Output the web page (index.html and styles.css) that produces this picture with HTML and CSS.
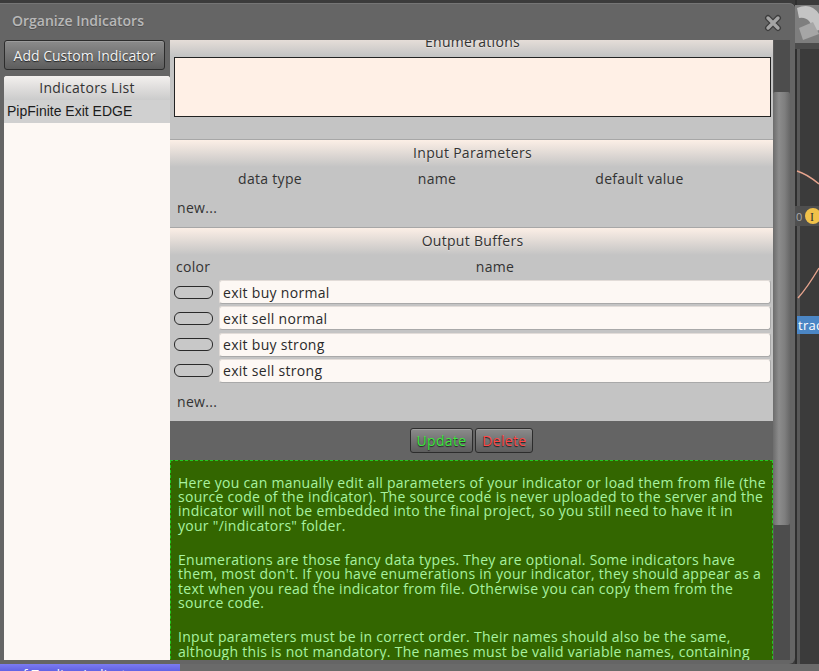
FILE: index.html
```html
<!DOCTYPE html>
<html lang="en">
<head>
  <meta charset="UTF-8" />
  <title>Organize Indicators</title>
  <meta name="viewport" content="width=device-width, initial-scale=1">
  <link rel="stylesheet" href="styles.css">
</head>
<body>
  <div class="desk">
    <div class="dialog">
      <div class="titlebar">
        <span class="title">Organize Indicators</span>
        <svg class="close" width="18" height="18" viewBox="0 0 18 18">
          <path d="M4 4 L14 14 M14 4 L4 14" stroke="#3c3c3c" stroke-width="6" stroke-linecap="round"/>
          <path d="M4 4 L14 14 M14 4 L4 14" stroke="#a4a4a4" stroke-width="3.4" stroke-linecap="round"/>
        </svg>
      </div>

      <div class="dialog-body">
        <div class="left">
          <button class="btn add">Add Custom Indicator</button>
          <div class="list">
            <div class="list-head">Indicators List</div>
            <div class="list-item">PipFinite Exit EDGE</div>
          </div>
        </div>

        <div class="main">
          <div class="content">
            <div class="section enums">
              <div class="section-title">Enumerations</div>
              <textarea class="enum-text"></textarea>
            </div>

            <div class="section">
              <div class="section-title">Input Parameters</div>
              <div class="cols params">
                <span>data type</span>
                <span>name</span>
                <span>default value</span>
              </div>
              <div class="new">new...</div>
            </div>

            <div class="section">
              <div class="section-title">Output Buffers</div>
              <div class="cols buffers">
                <span class="color-head">color</span>
                <span>name</span>
              </div>
              <div class="buffer"><span class="swatch"></span><input class="field" value="exit buy normal"></div>
              <div class="buffer"><span class="swatch"></span><input class="field" value="exit sell normal"></div>
              <div class="buffer"><span class="swatch"></span><input class="field" value="exit buy strong"></div>
              <div class="buffer"><span class="swatch"></span><input class="field" value="exit sell strong"></div>
              <div class="new out">new...</div>
            </div>

            <div class="cmdbar">
              <button class="btn update">Update</button>
              <button class="btn delete">Delete</button>
            </div>

            <div class="help">
              <p>Here you can manually edit all parameters of your indicator or load them from file (the source code of the indicator). The source code is never uploaded to the server and the indicator will not be embedded into the final project, so you still need to have it in your&nbsp;"/indicators" folder.</p>
              <p>Enumerations are those fancy data types. They are optional. Some indicators have them, most don't. If you have enumerations in your indicator, they should appear as a text when you read the indicator from file. Otherwise you can copy them from the source code.</p>
              <p>Input parameters must be in correct order. Their names should also be the same, although this is not mandatory. The names must be valid variable names, containing only letters, digits and underscores.</p>
            </div>
          </div>
        </div>

        <div class="scrollbar"><div class="thumb"></div></div>
      </div>
    </div>

    <div class="side">
      <svg width="24" height="664" viewBox="0 0 24 664">
        <rect x="0" y="0" width="2" height="664" fill="#2f2f2f"/>
        <rect x="2" y="40" width="3" height="624" fill="#585858"/>
        <rect x="0" y="5" width="24" height="38" fill="#7e7e7e"/>
        <path d="M2 8 Q16 2 24 14 L24 30 L18 32 Q16 16 4 18 Z" fill="#c4c4c4"/>
        <path d="M4 28 L18 22 L24 34 L8 40 Z" fill="#a6a6a6"/>
        <rect x="0" y="43" width="24" height="6" fill="#4c4c4c"/>
        <path d="M2 171 Q12 174 24 184" stroke="#e6a48e" stroke-width="1.4" fill="none"/>
        <rect x="0" y="206" width="24" height="20" fill="#4f4f4f"/>
        <text x="1" y="221" font-family="Open Sans, sans-serif" font-size="11" fill="#aaa">0</text>
        <circle cx="18" cy="216" r="8" fill="#f1c24a"/>
        <text x="15" y="221" font-family="Liberation Serif, serif" font-size="12" fill="#333">I</text>
        <path d="M3 298 Q12 288 24 268" stroke="#e6a48e" stroke-width="1.4" fill="none"/>
        <rect x="2" y="316" width="22" height="18" fill="#4b86c5"/>
        <text x="3" y="330" font-family="Open Sans, sans-serif" font-size="13" fill="#fff">trac</text>
      </svg>
    </div>
  </div>

  <div class="taskbar">
    <div class="task">of Trading Indicators</div>
  </div>
</body>
</html>
```

FILE: styles.css
```css
body {
  margin: 0;
  height: 671px;
  overflow: hidden;
  background: #3b3b3b;
  font-family: "Open Sans", "Noto Sans", sans-serif;
  letter-spacing: 0.3px;
  color: #333;
}

.desk {
  display: flex;
  height: 664px;
}

.dialog {
  width: 795px;
  flex: none;
  margin-top: 3px;
  background: #656565;
  border-radius: 0 6px 6px 0;
  box-shadow: inset 0 1px 0 #757575;
  display: flex;
  flex-direction: column;
}

.titlebar {
  height: 37px;
  box-sizing: border-box;
  padding: 0 13px 3px 12px;
  display: flex;
  align-items: center;
  justify-content: space-between;
}

.title {
  font-size: 14px;
  font-weight: 600;
  letter-spacing: 0;
  color: #b8b8b8;
  text-shadow: 0 1px 0 #505050;
}

.close {
  margin-top: 5px;
}

.dialog-body {
  display: flex;
  height: 620px;
  padding-left: 4px;
}

/* left column */

.left {
  width: 166px;
  display: flex;
  flex-direction: column;
  gap: 6px;
}

.btn {
  font-family: "Open Sans", "Noto Sans", sans-serif;
  font-size: 14px;
  letter-spacing: 0.3px;
  border: 1px solid #2c2c2c;
  border-radius: 3px;
  background: linear-gradient(#8b8b8b, #5d5d5d);
  box-shadow: inset 0 1px 0 rgba(255,255,255,0.15);
  padding: 0 6px;
  cursor: pointer;
}

.add {
  width: 161px;
  height: 30px;
  padding: 0 2px;
  letter-spacing: 0;
  color: #f2f2f2;
  text-shadow: 0 1px 1px #222;
}

.list {
  flex: 1;
  background: #fdf8f4;
  border-radius: 3px 3px 0 0;
  overflow: hidden;
}

.list-head {
  height: 24px;
  line-height: 24px;
  text-align: center;
  font-size: 14px;
  color: #333;
  background: linear-gradient(#f3f0ee, #cbcbcb);
}

.list-item {
  height: 23px;
  line-height: 23px;
  padding-left: 3px;
  background: #d0d0d0;
  font-family: "Liberation Sans", Arial, sans-serif;
  font-size: 14px;
  letter-spacing: 0;
  color: #1c1c1c;
}

/* main scroll area */

.main {
  width: 603px;
  height: 620px;
  overflow: hidden;
  background: #c4c4c4;
}

.content {
  margin-top: -12px;
}

.section {
  border-top: 1px solid #a7a7a7;
  background: linear-gradient(#fcefe6, #c4c4c4 27px);
  padding: 0 2px 6px 4px;
}

.section.enums {
  padding-bottom: 22px;
}

.section-title {
  height: 26px;
  line-height: 26px;
  text-align: center;
  font-size: 14px;
  color: #333;
  text-shadow: 0 1px 0 rgba(255,255,255,0.35);
}

.enum-text {
  display: block;
  width: 100%;
  height: 60px;
  margin: 2px 0 0;
  box-sizing: border-box;
  border: 1px solid #222;
  background: #fff0e6;
  resize: none;
}

.cols {
  display: grid;
  height: 26px;
  line-height: 26px;
  font-size: 14px;
  color: #333;
  text-align: center;
}

.params {
  grid-template-columns: 192px 142px 1fr;
}

.buffers {
  grid-template-columns: 45px 1fr;
}

.color-head {
  text-align: left;
  padding-left: 2px;
}

.new {
  height: 26px;
  line-height: 26px;
  margin-top: 3px;
  padding-left: 3px;
  font-size: 14px;
  color: #333;
}

.new.out {
  margin-top: 6px;
}

.buffer {
  display: grid;
  grid-template-columns: 45px 1fr;
  align-items: center;
  height: 24px;
  margin-bottom: 2.3px;
}

.swatch {
  width: 37px;
  height: 11px;
  border: 1px solid #2a2a2a;
  border-radius: 6px;
  background: #c8c8c8;
}

.field {
  height: 24px;
  box-sizing: border-box;
  margin: 0;
  padding: 0 3px;
  border: 1px solid #e2dcd8;
  border-right-color: #a9a9a9;
  border-bottom-color: #a9a9a9;
  border-radius: 3px;
  background: #fdf8f4;
  font-family: "Open Sans", "Noto Sans", sans-serif;
  font-size: 14px;
  letter-spacing: 0.3px;
  color: #2a2a2a;
}

.cmdbar {
  height: 39px;
  background: #646464;
  display: flex;
  justify-content: center;
  align-items: center;
  gap: 2px;
}

.cmdbar .btn {
  height: 25px;
  text-shadow: 0 1px 1px #1e1e1e;
}

.update {
  color: #3ee83e;
}

.delete {
  color: #ff4646;
}

.help {
  background: #336600;
  border: 1px dashed #21c921;
  padding: 15px 4px 0 7px;
  font-size: 14px;
  line-height: 14.3px;
  letter-spacing: 0.28px;
  color: #a8f3a0;
}

.help p {
  margin: 0 0 20px;
}

/* scrollbar */

.scrollbar {
  width: 17px;
  height: 620px;
  background: #4d4d4d;
  box-shadow: inset 1px 0 0 #5a5a5a;
}

.thumb {
  margin-top: 52px;
  height: 433px;
  border-radius: 2px;
  background: linear-gradient(to right, #6c6c6c, #8c8c8c 35%, #7e7e7e 70%, #676767);
}

/* background app */

.side {
  flex: 1;
  overflow: hidden;
}

.taskbar {
  height: 7px;
  background: #6a6a6a;
  overflow: hidden;
}

.task {
  width: 165px;
  height: 7px;
  padding: 2px 0 0 15px;
  background: linear-gradient(#7b7bf2, #5b5be0);
  color: #fff;
  font-size: 13px;
  line-height: 16px;
}
```
